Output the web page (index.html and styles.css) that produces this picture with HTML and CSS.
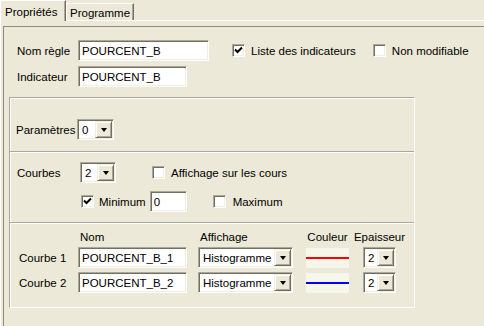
FILE: index.html
```html
<!DOCTYPE html>
<html lang="fr">
<head>
    <meta charset="UTF-8">
    <title>Propriétés</title>
    <link rel="stylesheet" href="styles.css">
</head>
<body>

    <div class="tabs">
        <div class="tab active">Propriétés</div>
        <div class="tab">Programme</div>
    </div>

    <div class="sheet">
        <div class="outer">

            <div class="head">
                <div class="row">
                    <span class="lbl w61">Nom règle</span>
                    <span class="field nom">POURCENT_B</span>
                    <label class="check chk-liste"><span class="box"><svg width="11" height="11" viewBox="0 0 11 11"><path d="M2 4.5 L4.5 7 L9 2.5" fill="none" stroke="#000" stroke-width="2"/></svg></span>Liste des indicateurs</label>
                    <label class="check chk-nonmod"><span class="box"></span>Non modifiable</label>
                </div>
                <div class="row r2">
                    <span class="lbl w61">Indicateur</span>
                    <span class="field ind">POURCENT_B</span>
                </div>
            </div>

            <div class="frame">
                <!-- paramètres -->
                <div class="sec sec1">
                    <div class="row">
                        <span class="lbl w61">Paramètres</span>
                        <div class="combo c-param"><span class="val">0</span><span class="btn"></span></div>
                    </div>
                </div>

                <!-- courbes -->
                <div class="sec sec2">
                    <div class="row">
                        <span class="lbl w63">Courbes</span>
                        <div class="combo c-courbes"><span class="val">2</span><span class="btn"></span></div>
                        <label class="check chk-aff"><span class="box"></span>Affichage sur les cours</label>
                    </div>
                    <div class="row r-min">
                        <label class="check chk-min"><span class="box"><svg width="11" height="11" viewBox="0 0 11 11"><path d="M2 4.5 L4.5 7 L9 2.5" fill="none" stroke="#000" stroke-width="2"/></svg></span>Minimum</label>
                        <span class="field f-min">0</span>
                        <label class="check chk-max"><span class="box"></span>Maximum</label>
                    </div>
                </div>

                <!-- détail des courbes -->
                <div class="sec sec3">
                    <div class="grid">
                        <span></span>
                        <span class="hd">Nom</span>
                        <span class="hd">Affichage</span>
                        <span class="hd hd-c w43">Couleur</span>
                        <span class="hd hd-c w33">Epaisseur</span>

                        <span class="rl">Courbe 1</span>
                        <span class="field f-nom">POURCENT_B_1</span>
                        <div class="combo c-aff"><span class="val">Histogramme</span><span class="btn"></span></div>
                        <div class="swatch"><span class="line red"></span></div>
                        <div class="combo c-ep"><span class="val">2</span><span class="btn"></span></div>

                        <span class="rl">Courbe 2</span>
                        <span class="field f-nom">POURCENT_B_2</span>
                        <div class="combo c-aff"><span class="val">Histogramme</span><span class="btn"></span></div>
                        <div class="swatch"><span class="line blue"></span></div>
                        <div class="combo c-ep"><span class="val">2</span><span class="btn"></span></div>
                    </div>
                </div>
            </div>

        </div>
    </div>

</body>
</html>
```

FILE: styles.css
```css
body {
    margin: 0;
    height: 326px;
    overflow: hidden;
    display: flex;
    flex-direction: column;
    background: #ece9d8;
    color: #000;
    font-family: "Liberation Sans", Arial, sans-serif;
    font-size: 11.5px;
}

/* onglets */
.tabs {
    display: flex;
    align-items: flex-end;
    height: 20px;
    flex-shrink: 0;
}
.tab {
    box-sizing: border-box;
    width: 68px;
    height: 17px;
    padding: 0 0 0 3px;
    line-height: 18px;
    border-top: 1px solid #fff;
    border-left: 1px solid #fff;
    border-right: 1px solid #716f64;
    box-shadow: inset -1px 0 0 #aca899;
    white-space: nowrap;
}
.tab.active {
    position: relative;
    z-index: 1;
    width: 66px;
    height: 21px;
    margin-bottom: -1px;
    padding: 1px 0 0 4px;
    line-height: 20px;
    background: #ece9d8;
    border-top-left-radius: 2px;
}

.sheet {
    flex: 1;
    display: flex;
    min-height: 0;
    border-top: 1px solid #fff;
    border-left: 1px solid #fff;
    padding: 5px 0 0 2px;
}
.outer {
    flex: 1;
    border-top: 1px solid #8d8b7f;
    border-left: 1px solid #8d8b7f;
}

.head {
    padding: 13px 0 0 13px;
}
.row {
    display: flex;
    align-items: center;
    height: 21px;
    white-space: nowrap;
}
.r2 {
    margin-top: 5px;
}
.w61 { width: 61px; }
.w63 { width: 63px; }

/* champs */
.field, .combo {
    box-sizing: border-box;
    height: 21px;
    background: #fff;
    border: 1px solid;
    border-color: #aca899 #fff #fff #aca899;
    box-shadow: inset 1px 1px 0 #716f64, inset -1px -1px 0 #f1efe2;
    white-space: nowrap;
}
.field {
    padding: 0 3px;
    line-height: 20px;
}
.nom { width: 131px; }
.ind { width: 109px; }

.combo {
    display: flex;
    padding: 1px;
}
.combo .val {
    flex: 1;
    padding-left: 3px;
    line-height: 19px;
    overflow: hidden;
}
.combo .btn {
    box-sizing: border-box;
    display: flex;
    align-items: center;
    justify-content: center;
    width: 17px;
    background: #ece9d8;
    border: 1px solid;
    border-color: #f1efe2 #716f64 #716f64 #f1efe2;
    box-shadow: inset 1px 1px 0 #fff, inset -1px -1px 0 #aca899;
}
.combo .btn::after {
    content: "";
    width: 0;
    height: 0;
    border-left: 3.5px solid transparent;
    border-right: 3.5px solid transparent;
    border-top: 4px solid #000;
    margin-top: 1px;
}

/* cases à cocher */
.check {
    display: flex;
    align-items: center;
}
.box {
    box-sizing: border-box;
    display: flex;
    align-items: center;
    justify-content: center;
    width: 13px;
    height: 13px;
    margin-right: 6px;
    background: #fff;
    border: 1px solid;
    border-color: #aca899 #fff #fff #aca899;
    box-shadow: inset 1px 1px 0 #716f64, inset -1px -1px 0 #f1efe2;
}
.chk-liste { margin-left: 23px; }
.chk-nonmod { margin-left: 17px; }

/* cadre */
.frame {
    box-sizing: border-box;
    width: 406px;
    margin: 10px 0 0 5px;
    border: 1px solid;
    border-color: #aca899 #fff #fff #aca899;
    box-shadow: inset 1px 1px 0 #fff;
}
.sec + .sec {
    border-top: 1px solid #aca899;
    box-shadow: inset 0 1px 0 #fff;
}
.sec1 {
    padding: 21px 0 11px 6px;
}
.c-param { width: 37px; }

.sec2 {
    padding: 10px 0 10px 7px;
}
.c-courbes { width: 36px; }
.chk-aff { margin-left: 36px; }
.r-min {
    margin-top: 8px;
    padding-left: 64px;
}
.chk-min .box { margin-right: 5px; }
.f-min {
    width: 37px;
    margin-left: 4px;
}
.chk-max { margin-left: 26px; }
.chk-max .box { margin-right: 7px; }

.sec3 {
    padding: 8px 0 14px 0;
}
.grid {
    display: grid;
    grid-template-columns: 68px 120px 108px 57px 33px;
    grid-template-rows: 12px 21px 21px;
    row-gap: 4px;
    align-items: center;
}
.hd {
    padding-left: 2px;
    line-height: 12px;
    white-space: nowrap;
}
.hd-c {
    display: flex;
    justify-content: center;
    padding-left: 0;
}
.w43 { width: 43px; }
.w33 { width: 33px; }
.rl {
    padding-left: 9px;
    white-space: nowrap;
}
.f-nom { width: 109px; }
.c-aff { width: 95px; }
.c-ep { width: 33px; }

.swatch {
    display: flex;
    align-items: center;
    width: 43px;
    height: 20px;
    background: #f6f6ea;
}
.line {
    width: 100%;
    height: 2px;
}
.red { background: #ff0000; }
.blue { background: #0000ff; }
```
